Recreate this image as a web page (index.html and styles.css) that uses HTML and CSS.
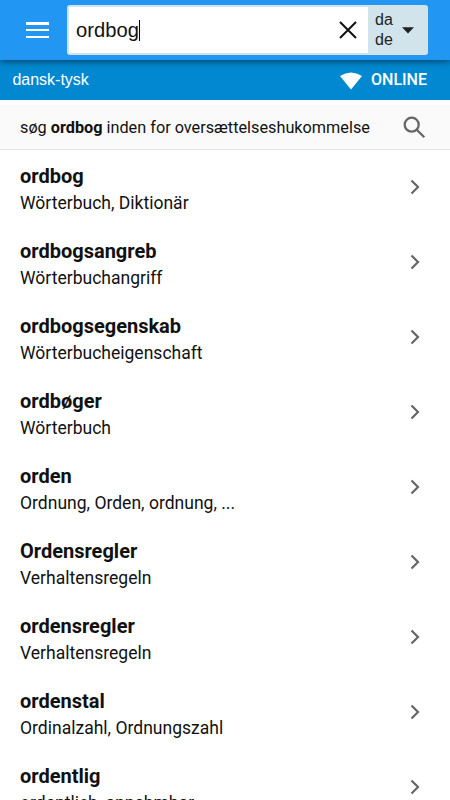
FILE: index.html
```html
<!DOCTYPE html>
<html lang="da">
<head>
<meta charset="UTF-8">
<meta name="viewport" content="width=device-width, initial-scale=1.0">
<title>Ordbog</title>
<link rel="stylesheet" href="styles.css">
</head>
<body>
<header class="topbar">
  <button class="menu" aria-label="Menu"><span></span><span></span><span></span></button>
  <div class="searchbox">
    <div class="field">
      <span class="query">ordbog</span><span class="caret"></span>
      <svg class="clear" width="18" height="18" viewBox="0 0 18 18"><path d="M1 1L17 17M17 1L1 17"/></svg>
    </div>
    <div class="langs">
      <div>da<br>de</div>
      <svg width="12" height="7" viewBox="0 0 12 7"><path d="M0 0.3H12L6 6.6z"/></svg>
    </div>
  </div>
</header>
<div class="status">
  <span class="pair">dansk-tysk</span>
  <svg width="22" height="18" viewBox="0 0 22 18"><path d="M0 4Q11-3.2 22 4L11 17.5z"/></svg>
  <span class="online">ONLINE</span>
</div>
<div class="memory">
  <span>søg <b>ordbog</b> inden for oversættelseshukommelse</span>
  <svg width="23" height="23" viewBox="0 0 23 23"><circle cx="8.7" cy="8.7" r="7"/><path d="M13.5 13.5L21.3 21.3"/></svg>
</div>
<ul class="results" id="results"></ul>

<script>
  const words = [
    ['ordbog', 'Wörterbuch, Diktionär'],
    ['ordbogsangreb', 'Wörterbuchangriff'],
    ['ordbogsegenskab', 'Wörterbucheigenschaft'],
    ['ordbøger', 'Wörterbuch'],
    ['orden', 'Ordnung, Orden, ordnung, ...'],
    ['Ordensregler', 'Verhaltensregeln'],
    ['ordensregler', 'Verhaltensregeln'],
    ['ordenstal', 'Ordinalzahl, Ordnungszahl'],
    ['ordentlig', 'ordentlich, annehmbar']
  ];

  document.getElementById('results').innerHTML = words.map(([word, translation]) => `
    <li class="result">
      <div>
        <div class="word">${word}</div>
        <div class="translation">${translation}</div>
      </div>
      <svg width="10" height="16" viewBox="0 0 10 16"><path d="M1.5 1.5L8 8L1.5 14.5"/></svg>
    </li>`).join('');
</script>
</body>
</html>
```

FILE: styles.css
```css
* {
  box-sizing: border-box;
}
body {
  margin: 0;
  height: 800px;
  overflow: hidden;
  background: #fff;
  color: #111;
  font-family: Roboto, sans-serif;
}
.topbar {
  position: relative;
  display: flex;
  height: 60px;
  padding: 5px 22px 5px 26px;
  background: #2196f3;
  box-shadow: 0 1px 7px rgba(0, 0, 0, 0.6);
}
.menu {
  display: flex;
  flex-direction: column;
  justify-content: space-between;
  width: 23px;
  height: 16px;
  margin: 17px 18px 0 0;
  padding: 0;
  border: none;
  background: none;
}
.menu span {
  height: 2.5px;
  background: #fff;
}
.searchbox {
  display: flex;
  flex: 1;
  padding: 2px;
  border-radius: 3px;
  background: #d1e4eb;
}
.field {
  display: flex;
  align-items: center;
  width: 299px;
  padding: 0 11px 0 7px;
  background: #fff;
  color: #111;
  font-family: "Liberation Sans", Arial, sans-serif;
  font-size: 20.2px;
}
.caret {
  width: 1px;
  height: 21px;
  background: #000;
}
.clear {
  margin-left: auto;
  fill: none;
  stroke: #111;
  stroke-width: 2;
}
.langs {
  display: flex;
  align-items: center;
  padding-left: 7px;
  color: #222;
  font-family: "Liberation Sans", Arial, sans-serif;
  font-size: 16px;
  line-height: 20px;
}
.langs svg {
  margin-left: 9px;
  fill: #222;
}
.status {
  display: flex;
  align-items: center;
  height: 40px;
  padding: 0 23px 1px 12.4px;
  background: #0288d1;
  color: #fff;
}
.pair {
  margin-right: auto;
  font-family: "Liberation Sans", Arial, sans-serif;
  font-size: 16px;
}
.status svg {
  margin: 3px 9px 0 0;
  fill: #fff;
}
.online {
  font-size: 16px;
  font-weight: 500;
}
.memory {
  display: flex;
  justify-content: space-between;
  align-items: center;
  height: 45px;
  margin-top: 5px;
  padding: 0 24px 0 20px;
  border-bottom: 1px solid #e4e4e4;
  background: #fafafa;
  font-size: 16.25px;
}
.memory svg {
  fill: none;
  stroke: #666;
  stroke-width: 2.3;
}
.results {
  margin: 0;
  padding: 0;
  list-style: none;
}
.result {
  display: flex;
  justify-content: space-between;
  height: 75px;
  padding: 12px 30px 0 20px;
}
.word {
  font-size: 20px;
  font-weight: bold;
  line-height: 28px;
}
.translation {
  font-size: 17.55px;
  line-height: 27px;
}
.result svg {
  margin-top: 17px;
  fill: none;
  stroke: #666;
  stroke-width: 2.2;
}
```
